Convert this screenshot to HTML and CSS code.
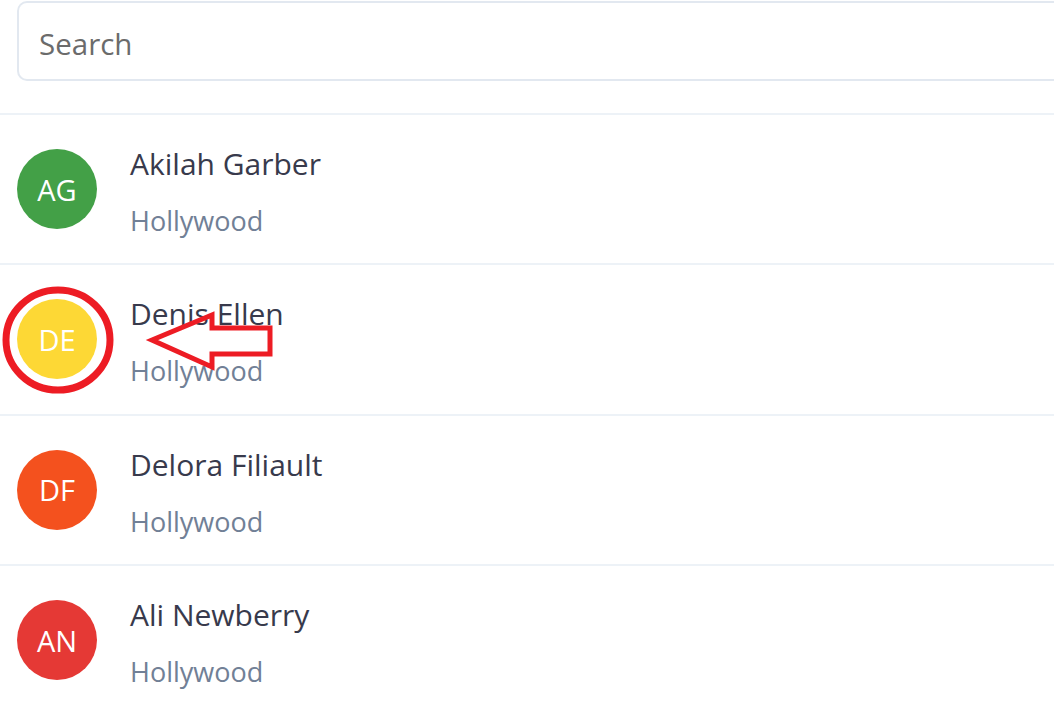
FILE: index.html
```html
<!DOCTYPE html>
<html lang="en">
<head>
    <meta charset="UTF-8">
    <meta name="viewport" content="width=device-width, initial-scale=1.0">
    <title>Contacts</title>
    <link rel="stylesheet" href="styles.css">
</head>
<body>

    <div class="search-bar">
        <input type="text" class="search-input" placeholder="Search">
    </div>

    <ul class="contact-list">
        <li class="contact">
            <div class="avatar green">AG</div>
            <div class="contact-info">
                <span class="contact-name">Akilah Garber</span>
                <span class="contact-city">Hollywood</span>
            </div>
        </li>
        <li class="contact">
            <div class="avatar yellow">DE</div>
            <div class="contact-info">
                <span class="contact-name">Denis Ellen</span>
                <span class="contact-city">Hollywood</span>
            </div>
        </li>
        <li class="contact">
            <div class="avatar orange">DF</div>
            <div class="contact-info">
                <span class="contact-name">Delora Filiault</span>
                <span class="contact-city">Hollywood</span>
            </div>
        </li>
        <li class="contact">
            <div class="avatar red">AN</div>
            <div class="contact-info">
                <span class="contact-name">Ali Newberry</span>
                <span class="contact-city">Hollywood</span>
            </div>
        </li>
    </ul>

    <!-- Red markup drawn over the screenshot -->
    <svg class="markup" width="1054" height="712" viewBox="0 0 1054 712">
        <ellipse cx="58" cy="340" rx="52" ry="50" fill="none" stroke="#ed1c24" stroke-width="7"/>
        <polygon points="152,340 212,315 212,328 270,328 270,354 212,354 212,367" fill="none" stroke="#ed1c24" stroke-width="5" stroke-linejoin="miter"/>
    </svg>

</body>
</html>
```
FILE: styles.css
```css
body {
    margin: 0;
    font-family: "Open Sans", "Noto Sans", Arial, sans-serif;
    background: #fff;
    overflow: hidden;
    position: relative;
}

.search-bar {
    padding: 1px 0 0 17px;
}

/* the field runs on past the right edge of the window */
.search-input {
    box-sizing: border-box;
    display: block;
    width: 100%;
    height: 80px;
    padding: 5px 20px 0 20px;
    border: 2px solid #e2e8f0;
    border-right: none;
    border-radius: 10px 0 0 10px;
    font-family: inherit;
    font-size: 29.5px;
    color: #333;
    outline: none;
}

.search-input::placeholder {
    color: #6b6b6b;
}

.contact-list {
    list-style: none;
    margin: 32px 0 0 0;
    padding: 0;
}

.contact {
    display: flex;
    align-items: center;
    height: 148.3px;
    padding-left: 17px;
    border-top: 2px solid #edf2f7;
}

.avatar {
    width: 80px;
    height: 80px;
    border-radius: 50%;
    display: flex;
    align-items: center;
    justify-content: center;
    color: #fff;
    font-size: 29px;
    flex-shrink: 0;
}

.green { background: #43a047; }
.yellow { background: #fdd835; }
.orange { background: #f4511e; }
.red { background: #e53935; }

.contact-info {
    display: flex;
    flex-direction: column;
    margin-left: 33px;
    margin-top: 7px;
}

.contact-name {
    font-size: 30px;
    line-height: 40px;
    color: #383a4c;
}

.contact-city {
    font-size: 27px;
    line-height: 40px;
    margin-top: 17px;
    color: #718096;
}

.markup {
    position: absolute;
    left: 0;
    top: 0;
    pointer-events: none;
}
```
